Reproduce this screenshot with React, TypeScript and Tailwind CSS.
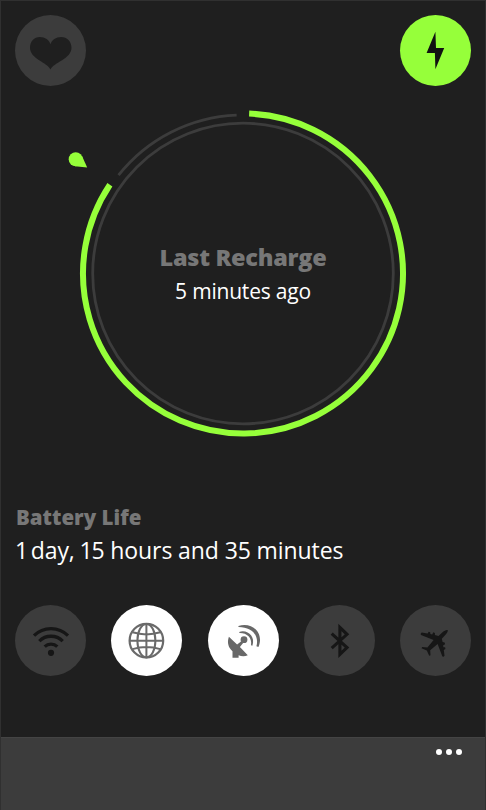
import type { ReactNode } from "react";

const CX = 243;
const CY = 273.5;

// angle in degrees, clockwise from 12 o'clock
const point = (r: number, deg: number) => {
  const a = (deg * Math.PI) / 180;
  return `${CX + r * Math.sin(a)} ${CY - r * Math.cos(a)}`;
};

const arc = (r: number, from: number, to: number) =>
  `M${point(r, from)}A${r} ${r} 0 ${to - from > 180 ? 1 : 0} 1 ${point(r, to)}`;

function RoundButton({ label, className, children }: { label: string; className: string; children: ReactNode }) {
  return (
    <button aria-label={label} className={`w-[71px] h-[71px] shrink-0 rounded-full ${className}`}>
      <svg viewBox="0 0 71 71" className="w-full h-full" fill="none">
        {children}
      </svg>
    </button>
  );
}

function Gauge() {
  return (
    <svg width="486" height="360" viewBox="0 86 486 360" fill="none" className="col-start-1 row-start-1">
      <circle cx={CX} cy={CY} r="150.3" stroke="#3c3c3c" strokeWidth="2.8" />
      <path d={arc(158.6, 308.3, 357.7)} stroke="#3c3c3c" strokeWidth="2.8" />
      <path d={arc(160, 2.2, 303.7)} stroke="#96ff3a" strokeWidth="6" />
      <circle cx="75.7" cy="159.2" r="7" fill="#96ff3a" />
      <path d="M87.2 167.6L75 166.2L82 156Z" fill="#96ff3a" />
    </svg>
  );
}

export default function App() {
  return (
    <div className="w-[486px] h-[810px] flex flex-col overflow-hidden bg-[#1f1f1f] border-t border-x border-[#303030] font-['Open_Sans','Noto_Sans',sans-serif] text-white">
      <header className="flex justify-between px-[14px] pt-[14px]">
        <RoundButton label="Favorite" className="bg-[#3c3c3c]">
          <path d="M35.5 54.5C32.5 47.5 15 44 15 32.8C15 26.5 19.2 22 24.8 22C30 22 34.2 25 35.5 29.3C36.8 25 41 22 46.2 22C52 22 56.5 26.5 56.5 32.8C56.5 44 38.5 47.5 35.5 54.5Z" fill="#1f1f1f" />
        </RoundButton>
        <RoundButton label="Power" className="bg-[#96ff3a]">
          <path d="M35.4 16.7L26.6 38.1H34.9L35.4 54.2L44.2 32.9H36Z" fill="#111" />
        </RoundButton>
      </header>

      <section className="grid justify-center -mx-px">
        <Gauge />
        <div className="col-start-1 row-start-1 pt-[154px] text-center">
          <h2 className="text-[23.5px] leading-[34px] tracking-[-0.3px] font-extrabold text-[#777]">Last Recharge</h2>
          <p className="text-[21px] leading-[34px] tracking-[-0.2px]">5 minutes ago</p>
        </div>
      </section>

      <section className="pl-[15px] pt-[55px] whitespace-nowrap">
        <h2 className="text-[20.5px] leading-[32px] font-extrabold text-[#777]">Battery Life</h2>
        <p className="-ml-px text-[23px] leading-[34px] tracking-[-0.1px]">
          <span className="tracking-[-1.7px]">1 </span>day,<span className="tracking-[-1.2px]"> 1</span>5 hours and 35 minutes
        </p>
      </section>

      <nav className="flex justify-between px-[14px] pt-[38px]">
        <RoundButton label="Wi-Fi" className="bg-[#3c3c3c]">
          <g stroke="#161616" strokeWidth="3.3">
            <path d="M19 30.6A24 24 0 0 1 53 30.6" />
            <path d="M24.3 36.1A16.5 16.5 0 0 1 47.7 36.1" />
            <path d="M29.7 41.6A9 9 0 0 1 42.3 41.6" />
          </g>
          <circle cx="36" cy="47.8" r="3.1" fill="#161616" />
        </RoundButton>
        <RoundButton label="Network" className="bg-white">
          <g stroke="#6a6a6a" strokeWidth="2">
            <circle cx="35.4" cy="35.7" r="16.8" strokeWidth="2.2" />
            <ellipse cx="35.4" cy="35.7" rx="9" ry="16.8" />
            <path d="M35.4 19V52.5M18.6 35.7H52.2M21.5 27.3Q35.4 31.5 49.3 27.3M21.5 44.1Q35.4 39.9 49.3 44.1" />
          </g>
        </RoundButton>
        <RoundButton label="Location" className="bg-white">
          <g fill="#686868">
            <path d="M20.9 31.7C18.8 37.6 20.4 42.6 24.5 46.2V52.7H30.6V50.2C33.5 51.5 36.8 51.6 39.8 50.3L31.9 42.1L35.1 37.9L33.3 36.2L29.1 39.4Z" />
            <circle cx="36" cy="34.7" r="3.4" />
            <path d="M31.2 26.9C39.5 24.2 47.8 31.5 44.4 40.8L43 40.2C44.4 32.6 38.7 27.8 31.5 28Z" />
            <path d="M30.4 20.9C44 16.4 56.6 28 50.4 42L48.4 41.3C51.6 29.8 43 22 30.5 22.1Z" />
          </g>
        </RoundButton>
        <RoundButton label="Bluetooth" className="bg-[#3c3c3c]">
          <path d="M27.7 28.7L43 42.6L35.9 49.4V22.4L43 29.3L27.7 43.1" stroke="#161616" strokeWidth="3.1" />
        </RoundButton>
        <RoundButton label="Airplane mode" className="bg-[#3c3c3c]">
          <path
            d="M47.7 25C46.2 24.5 44.3 25.7 42.8 27.1L38.5 31L34.9 30.1L34.9 27.9L33.3 27.3L32.2 29.5L30.4 29L30.2 27.3L28.6 26.8L27.7 28.5L21.6 27.4L20.6 28.9L21 30L33.6 34.9L27.4 42.6L22.2 42L21.5 43.2L26.8 45.6L29.2 50.8L30.5 50.2L30.2 45.3L37.6 38.9L42.4 51.6L43.6 51.7L44.5 50.8L43.8 45L45.4 44L45.1 42.3L43.4 42.2L43.2 40.3L45.1 39.2L44.6 37.5L42.6 37.1L41.8 33.7L45.5 29.8C46.9 28.2 48.2 26.3 47.7 25Z"
            fill="#161616"
          />
        </RoundButton>
      </nav>

      <footer className="mt-auto -mx-px h-[73px] shrink-0 bg-[#3c3c3c] border-t border-[#444] flex justify-end items-start pt-[11px] pr-6">
        <button aria-label="More" className="flex gap-1">
          <span className="w-[6px] h-[6px] rounded-full bg-white" />
          <span className="w-[6px] h-[6px] rounded-full bg-white" />
          <span className="w-[6px] h-[6px] rounded-full bg-white" />
        </button>
      </footer>
    </div>
  );
}
